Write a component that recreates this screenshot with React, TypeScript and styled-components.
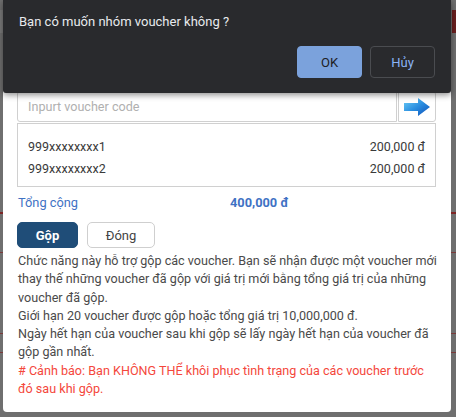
import React from 'react';
import styled, { createGlobalStyle } from 'styled-components';

const GlobalStyle = createGlobalStyle`
  html, body {
    margin: 0;
    padding: 0;
    background: #6f6f6f;
  }
  * {
    box-sizing: border-box;
  }
`;

// Page behind the overlay, only its edges show on both sides
const Screen = styled.div`
  position: relative;
  width: 456px;
  height: 417px;
  overflow: hidden;
  font-family: Roboto, 'Liberation Sans', Arial, sans-serif;
  background:
    linear-gradient(#7d2424, #7d2424) 0 212px / 100% 2px no-repeat,
    linear-gradient(#7a3a3a, #7a3a3a) 0 252px / 100% 1px no-repeat,
    linear-gradient(#7a3a3a, #7a3a3a) 0 333px / 100% 1px no-repeat,
    linear-gradient(#7a3a3a, #7a3a3a) 0 352px / 100% 1px no-repeat,
    linear-gradient(#6a1f1f, #6a1f1f) 452px 10px / 4px 23px no-repeat,
    linear-gradient(#7a7a7a, #7a7a7a) 0 10px / 3px 23px no-repeat,
    #6f6f6f;
`;

const Modal = styled.div`
  margin: 0 5px 0 3px;
  height: 412px;
  background: #fff;
  border-radius: 0 0 4px 4px;
  padding: 91px 15px 0 14px;
`;

const InputRow = styled.div`
  display: flex;
  height: 31px;
`;

const CodeInput = styled.input`
  flex: 1;
  height: 100%;
  border: 1px solid #d0d0d0;
  border-radius: 3px 0 0 3px;
  padding: 0 10px;
  font-family: inherit;
  font-size: 12.6px;
  color: #333;
  outline: none;

  &::placeholder {
    color: #b0b0b0;
  }
`;

const ArrowButton = styled.button`
  width: 38px;
  height: 100%;
  margin-left: 1px;
  border: 1px solid #d0d0d0;
  border-radius: 0 3px 3px 0;
  background: #fff;
  padding: 0;
  display: flex;
  align-items: center;
  justify-content: center;
`;

const VoucherList = styled.div`
  margin-top: 1px;
  border: 1px solid #d0d0d0;
  padding: 11px 10px 7px 10px;
`;

const VoucherRow = styled.div`
  display: flex;
  justify-content: space-between;
  align-items: center;
  height: 22px;
  font-size: 12.5px;
  color: #3a3a3a;
`;

const TotalRow = styled.div`
  display: grid;
  grid-template-columns: 212px 1fr;
  align-items: center;
  height: 30px;
  padding-left: 1px;
  font-size: 12.8px;
  color: #3f72c4;
`;

const TotalValue = styled.span`
  font-weight: 700;
`;

const Actions = styled.div`
  display: flex;
  gap: 9px;
  margin-top: 5px;
`;

const ActionButton = styled.button<{ $primary?: boolean }>`
  height: 26px;
  width: ${(p) => (p.$primary ? '61px' : '68px')};
  border-radius: 5px;
  font-family: inherit;
  font-size: 13px;
  font-weight: ${(p) => (p.$primary ? 700 : 400)};
  color: ${(p) => (p.$primary ? '#fff' : '#444')};
  background: ${(p) => (p.$primary ? '#1f4d78' : '#fff')};
  border: 1px solid ${(p) => (p.$primary ? '#1f4d78' : '#cfcfcf')};
  padding: 0;
`;

const Notes = styled.div`
  margin: 4px -2px 0 0;
  padding-left: 1px;
  font-size: 12.6px;
  line-height: 18.3px;
  color: #4a4a4a;
`;

const Warning = styled.div`
  color: #f4473c;
`;

// Browser confirm dialog over the page
const Confirm = styled.div`
  position: absolute;
  top: 0;
  left: 3px;
  width: 448px;
  height: 93px;
  background: #292a2d;
  border-radius: 0 0 3px 3px;
  box-shadow: 0 2px 6px rgba(0, 0, 0, 0.45);
  padding: 14px 16px 0 16px;
  display: flex;
  flex-direction: column;
`;

const ConfirmText = styled.div`
  font-size: 13px;
  color: #e8eaed;
  line-height: 16px;
`;

const ConfirmActions = styled.div`
  display: flex;
  justify-content: flex-end;
  gap: 8px;
  margin-top: 16px;
`;

const ConfirmButton = styled.button<{ $primary?: boolean }>`
  width: 65px;
  height: 32px;
  border-radius: 4px;
  font-family: inherit;
  font-size: 13px;
  padding: 0;
  color: ${(p) => (p.$primary ? '#202124' : '#8ab4f8')};
  background: ${(p) => (p.$primary ? '#7ba2dc' : 'transparent')};
  border: 1px solid ${(p) => (p.$primary ? '#7ba2dc' : '#4a4c50')};
`;

const ArrowIcon = () => (
  <svg width="28" height="20" viewBox="0 0 28 20">
    <defs>
      <linearGradient id="arrowFill" x1="0" y1="0" x2="1" y2="1">
        <stop offset="0" stopColor="#6fd0f7" />
        <stop offset="0.5" stopColor="#2a8ee0" />
        <stop offset="1" stopColor="#0d4fb8" />
      </linearGradient>
    </defs>
    <path d="M1 6 H15 V1 L27 10 L15 19 V14 H1 Z" fill="url(#arrowFill)" />
  </svg>
);

const vouchers = [
  { code: '999xxxxxxxx1', value: '200,000 đ' },
  { code: '999xxxxxxxx2', value: '200,000 đ' },
];

export default function App() {
  return (
    <Screen>
      <GlobalStyle />
      <Modal>
        <InputRow>
          <CodeInput placeholder="Inpurt voucher code" />
          <ArrowButton>
            <ArrowIcon />
          </ArrowButton>
        </InputRow>
        <VoucherList>
          {vouchers.map((v) => (
            <VoucherRow key={v.code}>
              <span>{v.code}</span>
              <span>{v.value}</span>
            </VoucherRow>
          ))}
        </VoucherList>
        <TotalRow>
          <span>Tổng cộng</span>
          <TotalValue>400,000 đ</TotalValue>
        </TotalRow>
        <Actions>
          <ActionButton $primary>Gộp</ActionButton>
          <ActionButton>Đóng</ActionButton>
        </Actions>
        <Notes>
          Chức năng này hỗ trợ gộp các voucher. Bạn sẽ nhận được một voucher mới thay thế những
          voucher đã gộp với giá trị mới bằng tổng giá trị của những voucher đã gộp.
          <br />
          Giới hạn 20 voucher được gộp hoặc tổng giá trị 10,000,000 đ.
          <br />
          Ngày hết hạn của voucher sau khi gộp sẽ lấy ngày hết hạn của voucher đã gộp gần nhất.
          <Warning>
            # Cảnh báo: Bạn KHÔNG THỂ khôi phục tình trạng của các voucher trước đó sau khi gộp.
          </Warning>
        </Notes>
      </Modal>
      <Confirm>
        <ConfirmText>Bạn có muốn nhóm voucher không ?</ConfirmText>
        <ConfirmActions>
          <ConfirmButton $primary>OK</ConfirmButton>
          <ConfirmButton>Hủy</ConfirmButton>
        </ConfirmActions>
      </Confirm>
    </Screen>
  );
}
